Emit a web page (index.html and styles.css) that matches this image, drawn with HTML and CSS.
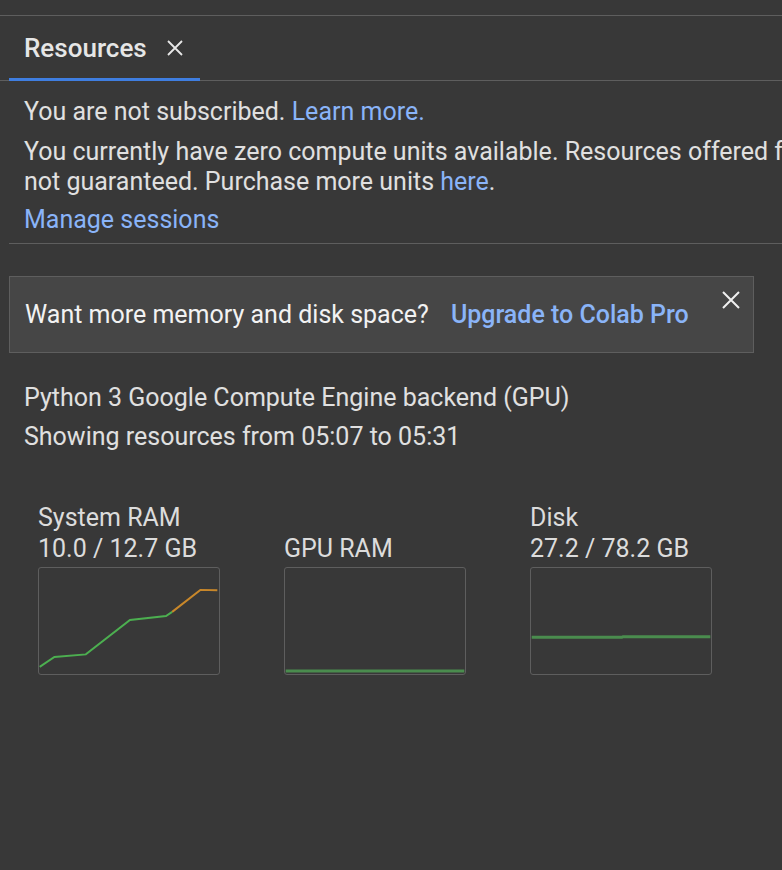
FILE: index.html
```html
<!DOCTYPE html>
<html lang="en">
<head>
<meta charset="utf-8">
<title>Resources</title>
<link rel="stylesheet" href="styles.css">
</head>
<body>
<div class="panel">
  <div class="topbar"></div>
  <div class="tabbar">
    <div class="tab">
      <span class="tab-title">Resources</span>
      <svg class="tab-close" width="16" height="16" viewBox="0 0 16 16"><path d="M1 1L15 15M15 1L1 15" stroke="#e8e8e8" stroke-width="1.8" fill="none"/></svg>
    </div>
  </div>
  <div class="account">
    <p class="line">You are not subscribed. <a class="link">Learn more.</a></p>
    <p class="line para">You currently have zero compute units available. Resources offered free of charge are<br>not guaranteed. Purchase more units <a class="link">here</a>.</p>
    <p class="line manage"><a class="link">Manage sessions</a></p>
  </div>
  <div class="banner">
    <span class="banner-text">Want more memory and disk space?</span>
    <a class="banner-link">Upgrade to Colab Pro</a>
    <svg class="banner-close" width="18" height="18" viewBox="0 0 18 18"><path d="M1 1L17 17M17 1L1 17" stroke="#f0f0f0" stroke-width="2" fill="none"/></svg>
  </div>
  <div class="backend">
    <p class="line">Python 3 Google Compute Engine backend (GPU)</p>
    <p class="line range">Showing resources from 05:07 to 05:31</p>
  </div>
  <div class="charts">
    <div class="chart">
      <div class="chart-label">System RAM<br>10.0 / 12.7 GB</div>
      <svg class="chart-box" width="182" height="108" viewBox="0 0 182 108">
        <polyline points="0,100.7 15,90.7 47,88 92,53 128.7,49 135,44.7" fill="none" stroke="#4caf50" stroke-width="2"/>
        <polyline points="135,44.7 163.7,22.3 181,22.7" fill="none" stroke="#c8872a" stroke-width="2"/>
      </svg>
    </div>
    <div class="chart">
      <div class="chart-label">GPU RAM</div>
      <svg class="chart-box" width="182" height="108" viewBox="0 0 182 108">
        <line x1="0" y1="105" x2="182" y2="105" stroke="#4a8c4e" stroke-width="3"/>
      </svg>
    </div>
    <div class="chart">
      <div class="chart-label">Disk<br>27.2 / 78.2 GB</div>
      <svg class="chart-box" width="182" height="108" viewBox="0 0 182 108">
        <polyline points="0,70.5 92,70.5 93,70 182,70" fill="none" stroke="#4a8c4e" stroke-width="3"/>
      </svg>
    </div>
  </div>
</div>
</body>
</html>
```

FILE: styles.css
```css
html, body {
  margin: 0;
  padding: 0;
  background: #383838;
  overflow: hidden;
  height: 100%;
}

.panel {
  width: 1400px;
  font-family: Roboto, "Liberation Sans", sans-serif;
  font-size: 25px;
  color: #e0e0e0;
}

.topbar {
  height: 15px;
  border-bottom: 1px solid #5e5e5e;
}

.tabbar {
  height: 64px;
  border-bottom: 1px solid #5e5e5e;
  display: flex;
}

.tab {
  margin-left: 9px;
  width: 176px;
  padding-left: 15px;
  display: flex;
  align-items: center;
  gap: 20px;
  border-bottom: 3px solid #3f7ee0;
  margin-bottom: -1px;
  padding-top: 2px;
}

.tab-title {
  font-weight: 500;
  font-size: 26px;
  color: #e6e6e6;
}

.tab-close {
  display: block;
}

.line {
  margin: 0;
  line-height: 30px;
}

.link {
  color: #8ab4f8;
  text-decoration: none;
}

.account {
  margin-left: 9px;
  padding: 16px 0 8px 15px;
  border-bottom: 1px solid #5e5e5e;
}

.para {
  margin-top: 10px;
}

.manage {
  margin-top: 8px;
}

.banner {
  position: relative;
  margin: 32px 0 0 9px;
  width: 745px;
  height: 77px;
  box-sizing: border-box;
  border: 1px solid #5e5e5e;
  background: #464646;
  display: flex;
  align-items: center;
  padding-left: 15px;
}

.banner-text {
  color: #f2f2f2;
}

.banner-link {
  margin-left: 22px;
  color: #8ab4f8;
  font-weight: 500;
}

.banner-close {
  position: absolute;
  top: 14px;
  right: 13px;
}

.backend {
  padding: 30px 0 0 24px;
}

.range {
  margin-top: 9px;
}

.charts {
  display: flex;
  align-items: flex-end;
  gap: 64px;
  padding: 50px 0 0 38px;
}

.chart {
  width: 182px;
}

.chart-label {
  line-height: 31px;
  color: #dcdcdc;
  margin-bottom: 3px;
}

.chart-box {
  display: block;
  box-sizing: border-box;
  border: 1px solid #5e5e5e;
  border-radius: 3px;
}
```
